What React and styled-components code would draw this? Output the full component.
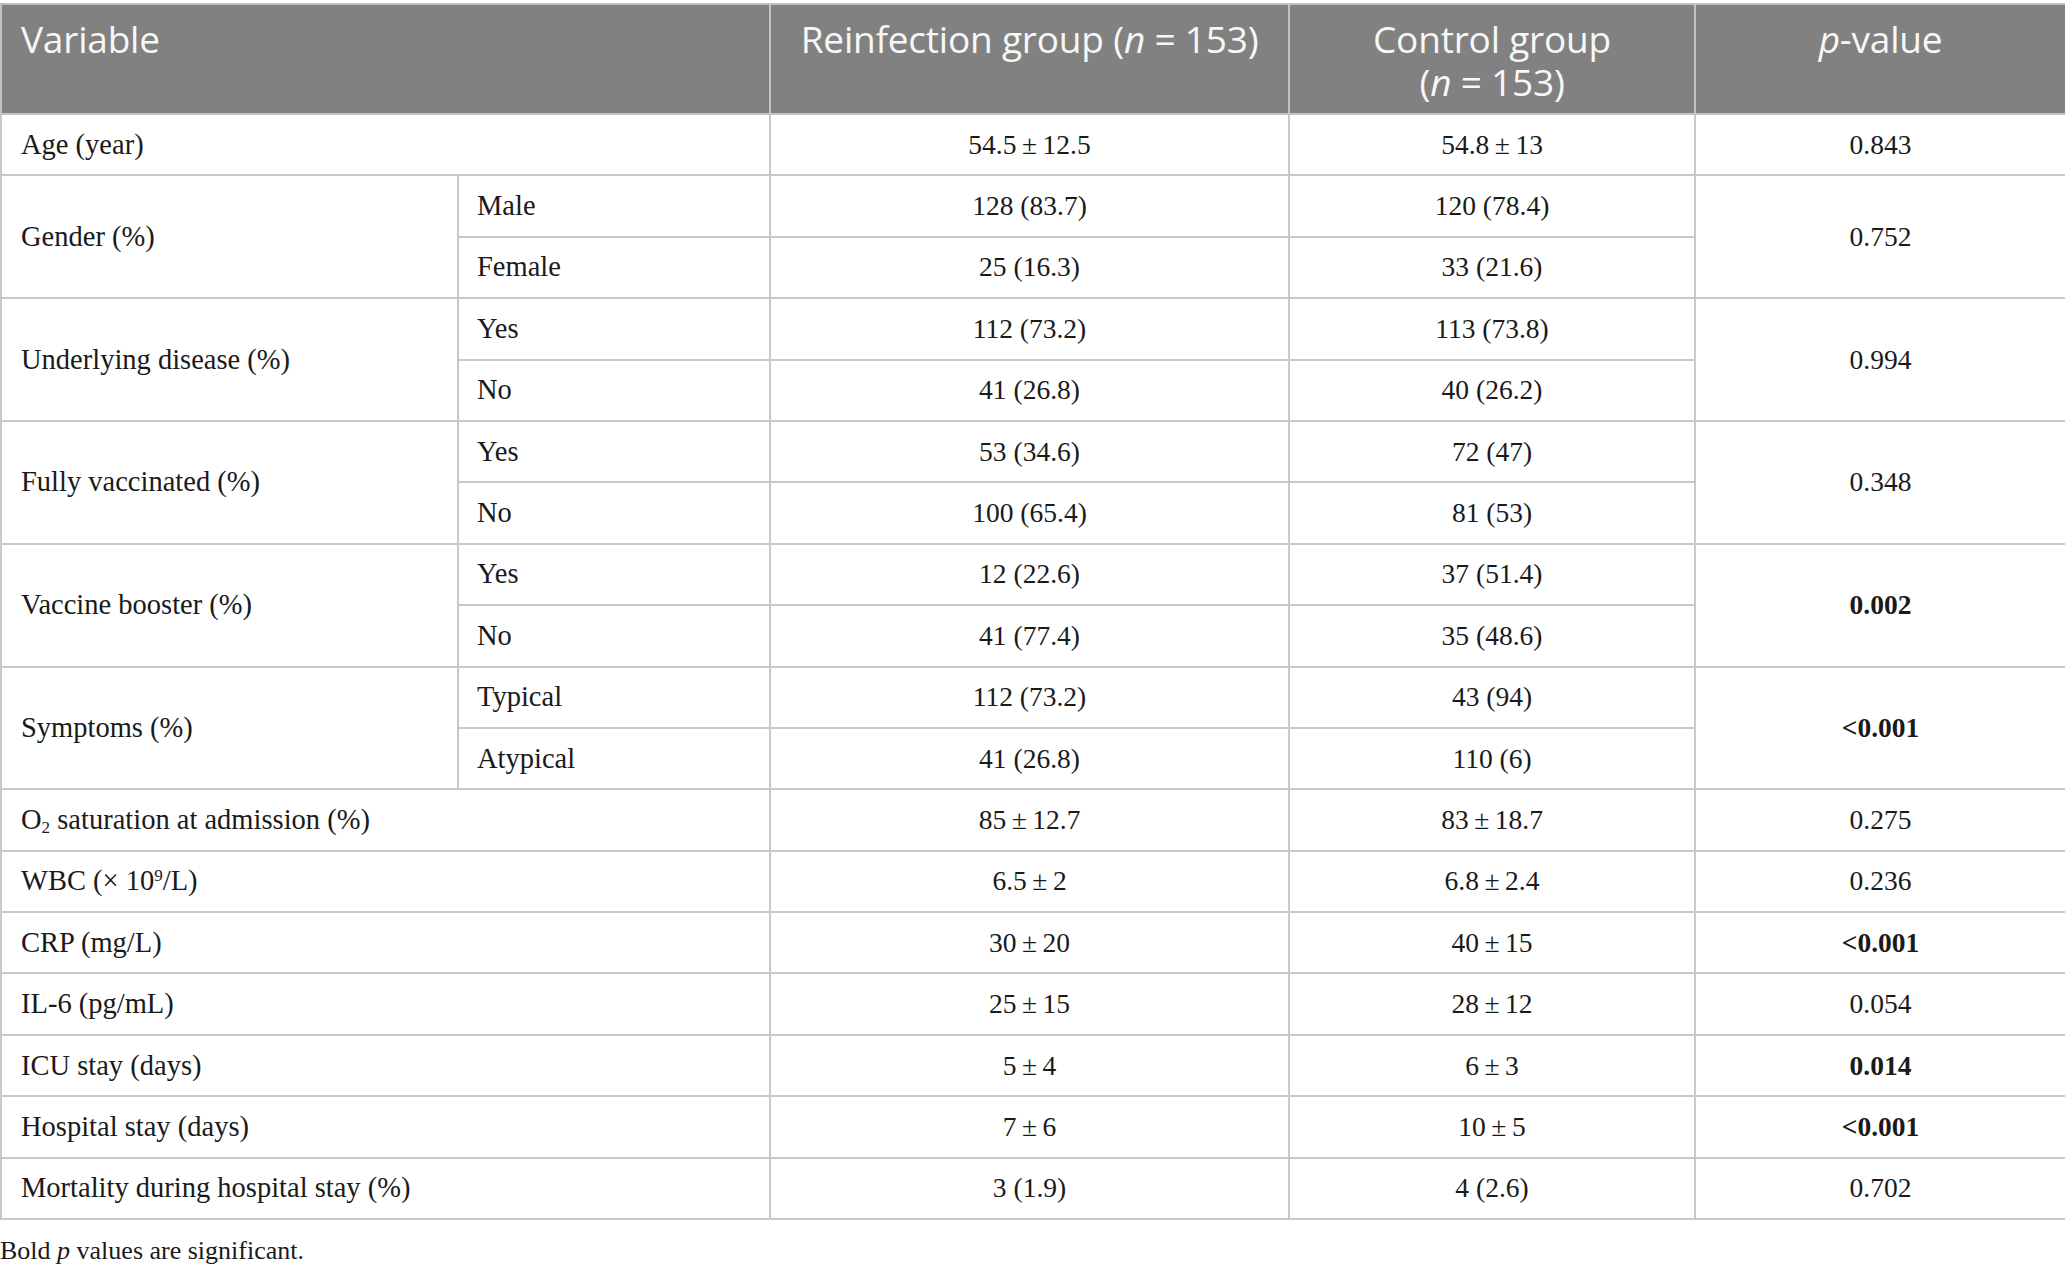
import React from "react";
import styled, { createGlobalStyle } from "styled-components";

const Global = createGlobalStyle`
  html, body { margin: 0; padding: 0; background: #ffffff; }
  body { font-family: "Liberation Serif", "Times New Roman", serif; color: #1a1a1a; }
`;

const Page = styled.div`
  padding-top: 3px;
  width: 2065px;
`;

const Table = styled.table`
  width: 2065px;
  border-collapse: collapse;
  table-layout: fixed;
`;

const HeadCell = styled.th`
  background: #808180;
  color: #f7f7f7;
  font-family: "Open Sans", "Noto Sans", sans-serif;
  font-weight: 400;
  font-size: 37px;
  line-height: 43px;
  letter-spacing: -0.2px;
  text-align: ${(p) => (p.$align === "left" ? "left" : "center")};
  vertical-align: top;
  padding: 12px 19px 0;
  height: 110px;
  box-sizing: border-box;
  border: 2px solid #c4c4c4;
  border-top-color: #bdbdbd;
  white-space: nowrap;
  i { font-style: italic; }
`;

const Row = styled.tr`
  height: 61.4px;
`;

const Cell = styled.td`
  font-size: ${(p) => (p.$center ? "27.5px" : "28.5px")};
  line-height: 30px;
  text-align: ${(p) => (p.$center ? "center" : "left")};
  font-weight: ${(p) => (p.$bold ? 700 : 400)};
  vertical-align: middle;
  padding: 0 ${(p) => (p.$sub ? "18px" : "19px")};
  border: 2px solid #c8c8c8;
  box-sizing: border-box;
  white-space: nowrap;
  sub { font-size: 60%; vertical-align: -0.25em; line-height: 0; }
  sup { font-size: 60%; vertical-align: 0.55em; line-height: 0; }
`;

const Note = styled.p`
  margin: 16px 0 0 0;
  font-size: 26px;
  line-height: 30px;
  i { font-style: italic; }
`;

const pm = (a, b) => (
  <>
    {a}
    {"\u2009±\u2009"}
    {b}
  </>
);

const groups = [
  { label: "Gender (%)", p: "0.752", rows: [["Male", "128 (83.7)", "120 (78.4)"], ["Female", "25 (16.3)", "33 (21.6)"]] },
  { label: "Underlying disease (%)", p: "0.994", rows: [["Yes", "112 (73.2)", "113 (73.8)"], ["No", "41 (26.8)", "40 (26.2)"]] },
  { label: "Fully vaccinated (%)", p: "0.348", rows: [["Yes", "53 (34.6)", "72 (47)"], ["No", "100 (65.4)", "81 (53)"]] },
  { label: "Vaccine booster (%)", p: "0.002", bold: true, rows: [["Yes", "12 (22.6)", "37 (51.4)"], ["No", "41 (77.4)", "35 (48.6)"]] },
  { label: "Symptoms (%)", p: "<0.001", bold: true, rows: [["Typical", "112 (73.2)", "43 (94)"], ["Atypical", "41 (26.8)", "110 (6)"]] },
];

const singles = [
  { label: <>O<sub>2</sub> saturation at admission (%)</>, a: pm("85", "12.7"), b: pm("83", "18.7"), p: "0.275" },
  { label: <>WBC (× 10<sup>9</sup>/L)</>, a: pm("6.5", "2"), b: pm("6.8", "2.4"), p: "0.236" },
  { label: "CRP (mg/L)", a: pm("30", "20"), b: pm("40", "15"), p: "<0.001", bold: true },
  { label: "IL-6 (pg/mL)", a: pm("25", "15"), b: pm("28", "12"), p: "0.054" },
  { label: "ICU stay (days)", a: pm("5", "4"), b: pm("6", "3"), p: "0.014", bold: true },
  { label: "Hospital stay (days)", a: pm("7", "6"), b: pm("10", "5"), p: "<0.001", bold: true },
  { label: "Mortality during hospital stay (%)", a: "3 (1.9)", b: "4 (2.6)", p: "0.702" },
];

function SingleRow({ r }) {
  return (
    <Row>
      <Cell colSpan={2}>{r.label}</Cell>
      <Cell $center>{r.a}</Cell>
      <Cell $center>{r.b}</Cell>
      <Cell $center $bold={r.bold}>{r.p}</Cell>
    </Row>
  );
}

export default function App() {
  return (
    <Page>
      <Global />
      <Table>
        <colgroup>
          <col style={{ width: 457 }} />
          <col style={{ width: 312 }} />
          <col style={{ width: 519 }} />
          <col style={{ width: 406 }} />
          <col style={{ width: 371 }} />
        </colgroup>
        <thead>
          <tr>
            <HeadCell colSpan={2} $align="left">Variable</HeadCell>
            <HeadCell>Reinfection group (<i>n</i> = 153)</HeadCell>
            <HeadCell>Control group<br />(<i>n</i> = 153)</HeadCell>
            <HeadCell><i>p</i>-value</HeadCell>
          </tr>
        </thead>
        <tbody>
          <SingleRow r={{ label: "Age (year)", a: pm("54.5", "12.5"), b: pm("54.8", "13"), p: "0.843" }} />
          {groups.map((g) =>
            g.rows.map((r, i) => (
              <Row key={g.label + i}>
                {i === 0 && <Cell rowSpan={2}>{g.label}</Cell>}
                <Cell $sub>{r[0]}</Cell>
                <Cell $center>{r[1]}</Cell>
                <Cell $center>{r[2]}</Cell>
                {i === 0 && <Cell rowSpan={2} $center $bold={g.bold}>{g.p}</Cell>}
              </Row>
            ))
          )}
          {singles.map((r, i) => (
            <SingleRow key={i} r={r} />
          ))}
        </tbody>
      </Table>
      <Note>Bold <i>p</i> values are significant.</Note>
    </Page>
  );
}
